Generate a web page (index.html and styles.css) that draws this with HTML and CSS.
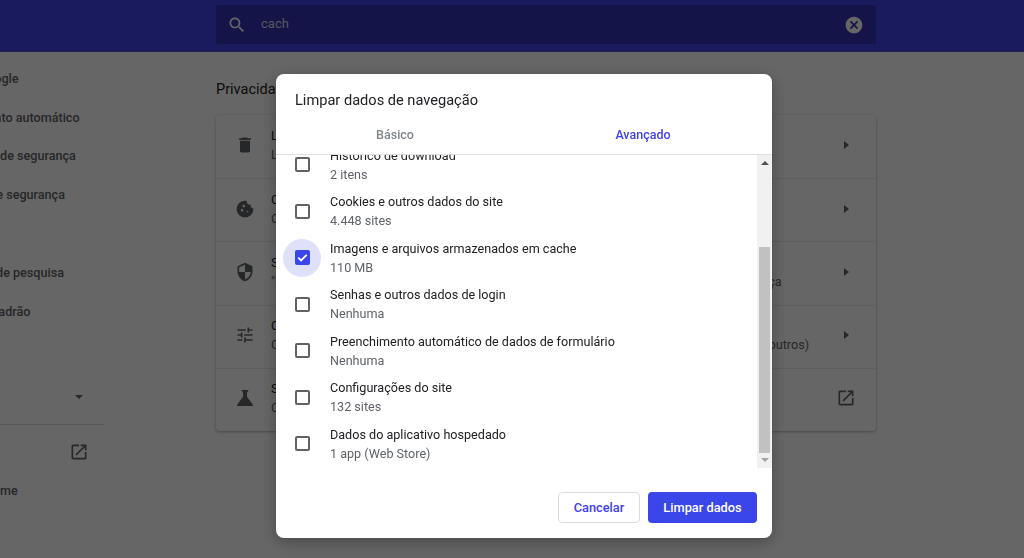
FILE: index.html
```html
<!DOCTYPE html>
<html>
<head>
    <title>Configurações</title>
    <link rel="stylesheet" href="styles.css">
</head>
<body>
<header class="topbar">
    <div class="search">
        <svg class="search-icon" viewBox="0 0 24 24"><path d="M15.5 14h-.79l-.28-.27C15.41 12.59 16 11.11 16 9.5 16 5.91 13.09 3 9.5 3S3 5.91 3 9.5 5.91 16 9.5 16c1.61 0 3.09-.59 4.23-1.57l.27.28v.79l5 4.99L20.49 19l-4.99-5zm-6 0C7.01 14 5 11.99 5 9.5S7.01 5 9.5 5 14 7.01 14 9.5 11.99 14 9.5 14z"/></svg>
        <span class="search-text">cach</span>
        <svg class="search-clear" viewBox="0 0 24 24"><path d="M12 2C6.47 2 2 6.47 2 12s4.47 10 10 10 10-4.47 10-10S17.53 2 12 2zm5 13.59L15.59 17 12 13.41 8.41 17 7 15.59 10.59 12 7 8.41 8.41 7 12 10.59 15.59 7 17 8.41 13.41 12 17 15.59z"/></svg>
    </div>
</header>

<div class="page">
    <nav class="sidebar">
        <a class="nav-item">Você e o Google</a>
        <a class="nav-item">Preenchimento automático</a>
        <a class="nav-item">Verificações de segurança</a>
        <a class="nav-item">Privacidade e segurança</a>
        <a class="nav-item">Aparência</a>
        <a class="nav-item">Mecanismo de pesquisa</a>
        <a class="nav-item">Navegador padrão</a>
        <a class="nav-item">Inicialização</a>
        <a class="nav-item nav-advanced">Avançado <span class="caret-down"></span></a>
        <div class="nav-divider"></div>
        <a class="nav-item nav-link">Extensões
            <svg class="icon" viewBox="0 0 24 24"><path d="M19 19H5V5h7V3H5c-1.11 0-2 .9-2 2v14c0 1.1.89 2 2 2h14c1.1 0 2-.9 2-2v-7h-2v7zM14 3v2h3.59l-9.83 9.83 1.41 1.41L19 6.41V10h2V3h-7z"/></svg>
        </a>
        <a class="nav-item">Sobre o Chrome</a>
    </nav>

    <main class="content">
        <h2 class="section-title">Privacidade e segurança</h2>
        <section class="card">
            <div class="card-row">
                <svg class="icon" viewBox="0 0 24 24"><path d="M6 19c0 1.1.9 2 2 2h8c1.1 0 2-.9 2-2V7H6v12zM19 4h-3.5l-1-1h-5l-1 1H5v2h14V4z"/></svg>
                <div class="card-text">
                    <div class="card-title">Limpar dados de navegação</div>
                    <div class="card-sub">Limpe o histórico, cookies, cache e muito mais</div>
                </div>
                <span class="caret-right"></span>
            </div>
            <div class="card-row">
                <svg class="icon" viewBox="0 0 24 24"><path d="M21.95 10.99c-1.79-.03-3.7-1.95-2.68-4.22-2.97 1-5.78-1.59-5.19-4.56C7.11.74 2 6.41 2 12c0 5.52 4.48 10 10 10 5.89 0 10.54-5.08 9.95-11.01zM8.5 15c-.83 0-1.5-.67-1.5-1.5S7.67 12 8.5 12s1.5.67 1.5 1.5S9.33 15 8.5 15zm2-5C9.67 10 9 9.33 9 8.5S9.67 7 10.5 7s1.5.67 1.5 1.5-.67 1.5-1.5 1.5zm4.5 6c-.55 0-1-.45-1-1s.45-1 1-1 1 .45 1 1-.45 1-1 1z"/></svg>
                <div class="card-text">
                    <div class="card-title">Cookies e outros dados do site</div>
                    <div class="card-sub">Os cookies de terceiros são bloqueados no modo de navegação anônima</div>
                </div>
                <span class="caret-right"></span>
            </div>
            <div class="card-row">
                <svg class="icon" viewBox="0 0 24 24"><path d="M12 1L3 5v6c0 5.55 3.84 10.74 9 12 5.16-1.26 9-6.45 9-12V5l-9-4zm0 10.99h7c-.53 4.12-3.28 7.79-7 8.94V12H5V6.3l7-3.11v8.8z"/></svg>
                <div class="card-text">
                    <div class="card-title">Segurança</div>
                    <div class="card-sub">"Navegação segura" (proteção contra sites perigosos) e outras configurações de segurança</div>
                </div>
                <span class="caret-right"></span>
            </div>
            <div class="card-row">
                <svg class="icon" viewBox="0 0 24 24"><path d="M3 17v2h6v-2H3zM3 5v2h10V5H3zm10 16v-2h8v-2h-8v-2h-2v6h2zM7 9v2H3v2h4v2h2V9H7zm14 4v-2H11v2h10zm-6-4h2V7h4V5h-4V3h-2v6z"/></svg>
                <div class="card-text">
                    <div class="card-title">Configurações do site</div>
                    <div class="card-sub">Controla quais informações os sites podem usar e exibir (localização, câmera, pop-ups e outros)</div>
                </div>
                <span class="caret-right"></span>
            </div>
            <div class="card-row">
                <svg class="icon" viewBox="2 2 20 20"><path d="M19.8 18.4L14 10.67V6.5l1.35-1.69c.26-.33.03-.81-.39-.81H9.04c-.42 0-.65.48-.39.81L10 6.5v4.17L4.2 18.4c-.49.66-.02 1.6.8 1.6h14c.82 0 1.3-.94.8-1.6z"/></svg>
                <div class="card-text">
                    <div class="card-title">Sandbox de privacidade</div>
                    <div class="card-sub">Os recursos de teste estão ativados</div>
                </div>
                <svg class="icon" viewBox="0 0 24 24"><path d="M19 19H5V5h7V3H5c-1.11 0-2 .9-2 2v14c0 1.1.89 2 2 2h14c1.1 0 2-.9 2-2v-7h-2v7zM14 3v2h3.59l-9.83 9.83 1.41 1.41L19 6.41V10h2V3h-7z"/></svg>
            </div>
        </section>
    </main>
</div>

<div class="scrim">
    <div class="dialog">
        <div class="dialog-title">Limpar dados de navegação</div>
        <div class="tabs">
            <div class="tab">Básico</div>
            <div class="tab tab-active">Avançado</div>
        </div>
        <div class="list-area">
            <div class="list">
                <div class="check-row">
                    <span class="checkbox"></span>
                    <div><div class="check-title">Histórico de download</div><div class="check-sub">2 itens</div></div>
                </div>
                <div class="check-row">
                    <span class="checkbox"></span>
                    <div><div class="check-title">Cookies e outros dados do site</div><div class="check-sub">4.448 sites</div></div>
                </div>
                <div class="check-row">
                    <span class="checkbox checked">
                        <svg viewBox="0 0 16 16"><path d="M3.5 8.2l3 3 6-6" fill="none" stroke="#fff" stroke-width="2"/></svg>
                    </span>
                    <div><div class="check-title">Imagens e arquivos armazenados em cache</div><div class="check-sub">110 MB</div></div>
                </div>
                <div class="check-row">
                    <span class="checkbox"></span>
                    <div><div class="check-title">Senhas e outros dados de login</div><div class="check-sub">Nenhuma</div></div>
                </div>
                <div class="check-row">
                    <span class="checkbox"></span>
                    <div><div class="check-title">Preenchimento automático de dados de formulário</div><div class="check-sub">Nenhuma</div></div>
                </div>
                <div class="check-row">
                    <span class="checkbox"></span>
                    <div><div class="check-title">Configurações do site</div><div class="check-sub">132 sites</div></div>
                </div>
                <div class="check-row">
                    <span class="checkbox"></span>
                    <div><div class="check-title">Dados do aplicativo hospedado</div><div class="check-sub">1 app (Web Store)</div></div>
                </div>
            </div>
            <div class="scrollbar">
                <span class="arrow-up"></span>
                <div class="thumb"></div>
                <span class="arrow-down"></span>
            </div>
        </div>
        <div class="dialog-buttons">
            <button class="btn btn-cancel">Cancelar</button>
            <button class="btn btn-confirm">Limpar dados</button>
        </div>
    </div>
</div>
</body>
</html>
```

FILE: styles.css
```css
html, body {
    height: 100%;
}

body {
    font-family: Roboto, 'Liberation Sans', sans-serif;
    background-color: #fff;
    color: #202124;
    margin: 0;
    overflow: hidden;
    font-size: 12.6px;
}

.topbar {
    height: 46px;
    background-color: #4141eb;
    border-bottom: 1px solid #5a5ad0;
    display: flex;
    padding-left: 216px;
    padding-top: 5px;
}

.search {
    width: 660px;
    height: 39px;
    background-color: #3434b4;
    border-radius: 2px;
    display: flex;
    align-items: center;
}

.search-icon {
    width: 20px;
    height: 20px;
    fill: #fff;
    margin-left: 11px;
}

.search-text {
    margin-left: 14px;
    padding-bottom: 2px;
    flex: 1;
    font-size: 13px;
    color: #d4d4f0;
}

.search-clear {
    width: 20px;
    height: 20px;
    fill: #fff;
    margin-right: 12px;
}

.page {
    display: flex;
}

.sidebar {
    width: 177px;
    margin-left: -73px;
    padding-top: 7px;
    flex-shrink: 0;
}

.nav-item {
    display: flex;
    align-items: center;
    justify-content: space-between;
    height: 38.8px;
    padding-right: 16px;
    font-weight: 500;
    color: #5f6368;
    white-space: nowrap;
}

.nav-advanced {
    margin-top: 8px;
}

.nav-divider {
    border-top: 1px solid #dadce0;
    margin: 8px 0 7px;
}

.caret-down {
    width: 0;
    height: 0;
    border-left: 4px solid transparent;
    border-right: 4px solid transparent;
    border-top: 4px solid #5f6368;
    margin-right: 5px;
}

.nav-link .icon {
    margin-right: -1px;
}

.content {
    margin-left: 112px;
    width: 660px;
    flex-shrink: 0;
}

.section-title {
    font-size: 14.5px;
    font-weight: 400;
    color: #202124;
    margin: 28px 0 15px;
    line-height: 20px;
}

.card {
    background-color: #fff;
    border-radius: 4px;
    box-shadow: 0 1px 3px rgba(60, 64, 67, 0.4);
}

.card-row {
    height: 63.2px;
    box-sizing: border-box;
    display: flex;
    align-items: center;
    padding: 0 20px 3px 19px;
    border-top: 1px solid #e8eaed;
}

.card-row:first-child {
    border-top: none;
}

.icon {
    width: 20px;
    height: 20px;
    fill: #5f6368;
    flex-shrink: 0;
}

.card-text {
    flex: 1;
    margin-left: 16px;
    line-height: 19px;
    white-space: nowrap;
}

.card-sub {
    color: #5f6368;
}

.caret-right {
    width: 0;
    height: 0;
    border-top: 4px solid transparent;
    border-bottom: 4px solid transparent;
    border-left: 5px solid #5f6368;
    margin-right: 7px;
}

.scrim {
    position: fixed;
    top: 0;
    left: 0;
    right: 0;
    bottom: 0;
    background-color: rgba(0, 0, 0, 0.6);
}

.dialog {
    width: 496px;
    height: 464px;
    margin: 74px 0 0 276px;
    background-color: #fff;
    border-radius: 8px;
    box-shadow: 0 4px 16px rgba(0, 0, 0, 0.3);
    display: flex;
    flex-direction: column;
    overflow: hidden;
}

.dialog-title {
    font-size: 14.6px;
    color: #202124;
    padding: 16px 19px 0;
    line-height: 20px;
}

.tabs {
    display: grid;
    grid-template-columns: 248px 248px;
    margin: 15px 0 0 -5px;
    width: 501px;
    height: 29px;
    line-height: 20px;
    font-weight: 500;
    font-size: 12.5px;
    text-align: center;
    color: #80868b;
}

.tab-active {
    color: #4141eb;
}

.list-area {
    display: flex;
    height: 314px;
    border-top: 1px solid #e0e0e0;
    overflow: hidden;
}

.list {
    flex: 1;
    margin-top: -13.3px;
    padding-left: 19px;
}

.check-row {
    display: flex;
    align-items: center;
    height: 46.5px;
    gap: 20px;
}

.checkbox {
    width: 15px;
    height: 15px;
    box-sizing: border-box;
    border: 2px solid #5f6368;
    border-radius: 2px;
    flex-shrink: 0;
}

.checkbox.checked {
    border: none;
    position: relative;
    z-index: 1;
}

/* ripple behind the focused box */
.checkbox.checked::before {
    content: "";
    position: absolute;
    top: -11.5px;
    left: -12px;
    width: 38px;
    height: 38px;
    border-radius: 50%;
    background-color: #dfe1fb;
    z-index: -1;
}

.checkbox.checked::after {
    content: "";
    position: absolute;
    top: 0;
    left: 0;
    width: 15px;
    height: 15px;
    border-radius: 2px;
    background-color: #3b46ea;
    z-index: -1;
}

.checkbox svg {
    display: block;
}

.check-title {
    line-height: 19px;
    color: #202124;
}

.check-sub {
    line-height: 19px;
    color: #5f6368;
}

.scrollbar {
    width: 15px;
    height: 313px;
    background-color: #f1f1f1;
    display: flex;
    flex-direction: column;
    align-items: center;
    flex-shrink: 0;
}

.arrow-up {
    width: 0;
    height: 0;
    border-left: 4px solid transparent;
    border-right: 4px solid transparent;
    border-bottom: 4px solid #505050;
    margin-top: 6px;
}

.thumb {
    width: 11px;
    height: 206px;
    margin-top: 82px;
    background-color: #c1c1c1;
}

.arrow-down {
    width: 0;
    height: 0;
    border-left: 4px solid transparent;
    border-right: 4px solid transparent;
    border-top: 4px solid #a3a3a3;
    margin-top: 5px;
}

.dialog-buttons {
    display: flex;
    justify-content: flex-end;
    gap: 8px;
    padding: 23px 15px 0 0;
}

.btn {
    font-family: Roboto, 'Liberation Sans', sans-serif;
    font-size: 12.8px;
    font-weight: 500;
    height: 31px;
    border-radius: 4px;
    cursor: pointer;
}

.btn-cancel {
    width: 82px;
    background-color: #fff;
    color: #4141eb;
    border: 1px solid #dadce0;
}

.btn-confirm {
    width: 109px;
    background-color: #3b46ea;
    color: #fff;
    border: none;
}
```
